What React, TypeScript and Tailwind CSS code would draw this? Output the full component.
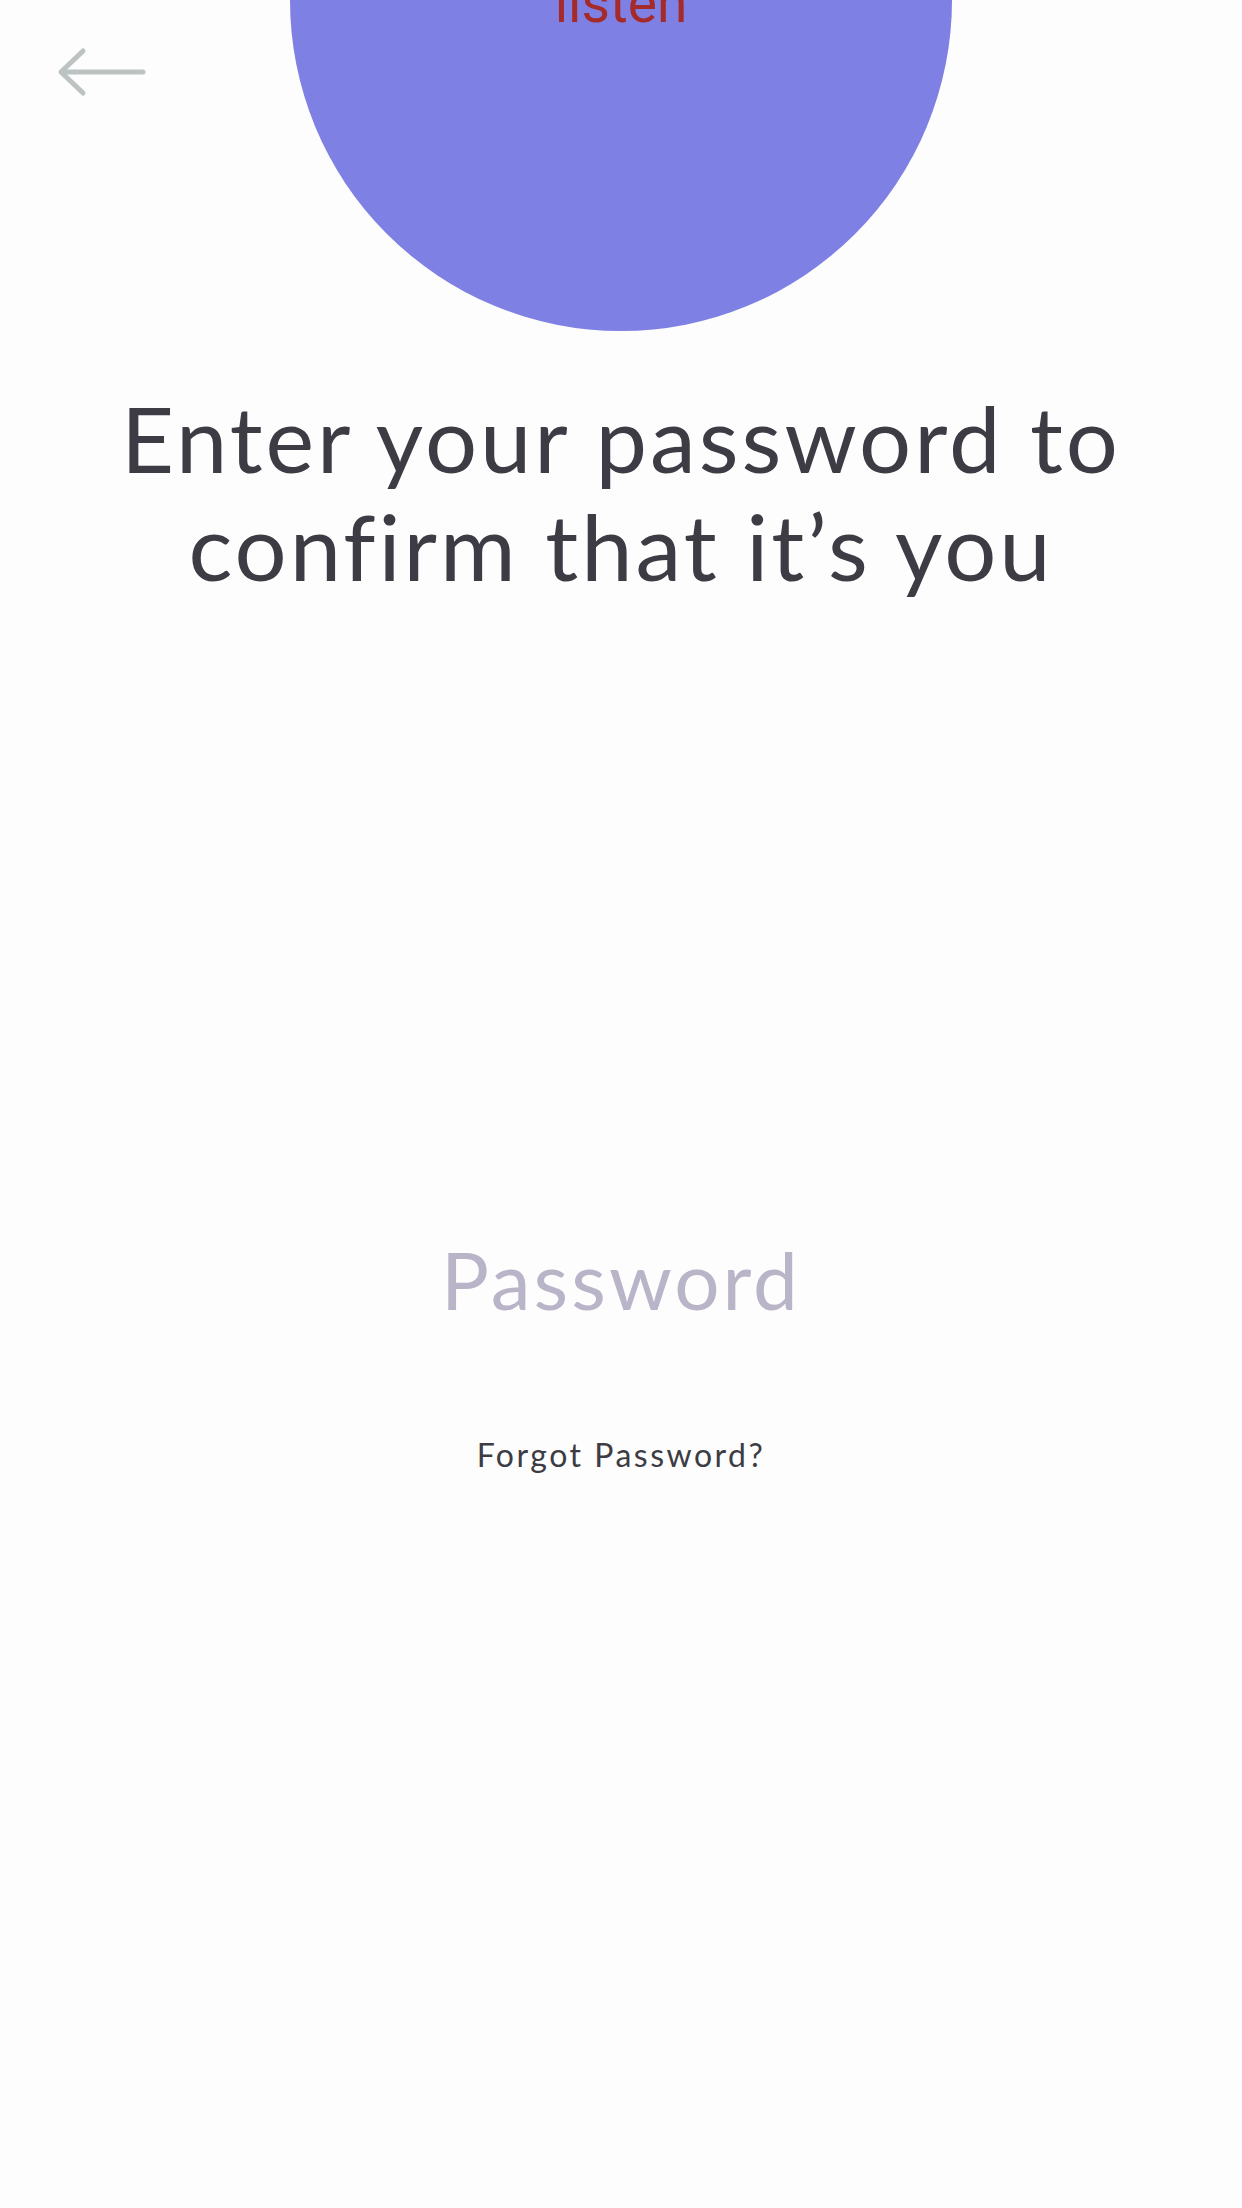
import { useState } from 'react'

export default function App() {
  const [password, setPassword] = useState('')

  return (
    <div className="relative min-h-[2208px] w-full overflow-hidden bg-[#fdfdfd] flex flex-col items-center font-['Lato','Noto_Sans',sans-serif]">
      {/* back arrow */}
      <button className="absolute left-0 top-0 w-[160px] h-[120px]" aria-label="Back">
        <svg width="160" height="120" viewBox="0 0 160 120" fill="none">
          <path
            d="M143 72 H61 M83 51 L61 72 L83 93"
            stroke="#bdc3c3"
            strokeWidth="5"
            strokeLinecap="round"
            strokeLinejoin="round"
          />
        </svg>
      </button>

      {/* logo circle */}
      <div className="w-[662px] h-[662px] -mt-[331px] shrink-0 rounded-full bg-[#7f80e3] flex items-center justify-center">
        <span className="pt-[6px] text-[55px] leading-normal text-[#a52a2a] font-['Roboto',sans-serif]">
          listen
        </span>
      </div>

      <h1 className="mt-[53px] text-center text-[92px] leading-[108px] tracking-[3px] text-[#3d3c44] font-normal">
        Enter your password to
        <br />
        confirm that it’s you
      </h1>

      <input
        type="password"
        value={password}
        onChange={(e) => setPassword(e.target.value)}
        placeholder="Password"
        className="mt-[631px] w-[900px] bg-transparent text-center text-[80px] leading-[96px] h-[96px] tracking-[3px] text-[#3d3c44] placeholder:text-[#bab4c8] outline-none"
      />

      <button className="mt-[109px] text-[32px] leading-[38px] tracking-[2.5px] text-[#3d3c44]">
        Forgot Password?
      </button>
    </div>
  )
}
